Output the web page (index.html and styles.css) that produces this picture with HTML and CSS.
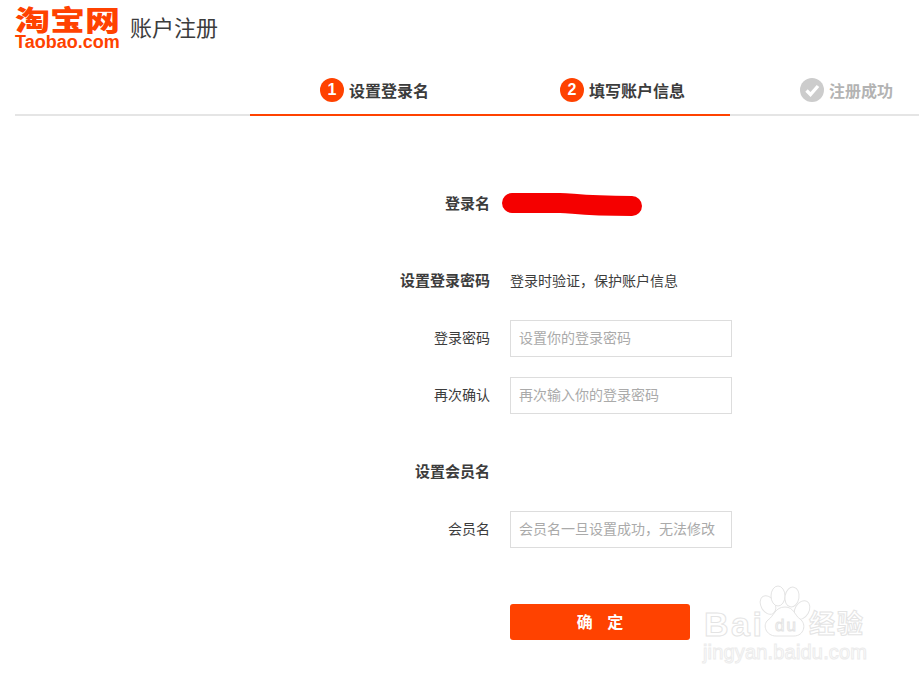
FILE: index.html
```html
<!DOCTYPE html>
<html lang="zh-CN">
<head>
    <meta charset="UTF-8">
    <meta name="viewport" content="width=device-width, initial-scale=1.0">
    <title>账户注册</title>
    <link rel="stylesheet" href="styles.css">
</head>
<body>
    <div class="page">
        <div class="header">
            <div class="logo">
                <div class="logo-cn">淘宝网</div>
                <div class="logo-en">Taobao.com</div>
            </div>
            <div class="page-title">账户注册</div>
        </div>

        <div class="steps">
            <div class="step-spacer"></div>
            <div class="step active"><span class="step-num">1</span>设置登录名</div>
            <div class="step active"><span class="step-num">2</span>填写账户信息</div>
            <div class="step done">
                <svg class="step-check" width="24" height="24" viewBox="0 0 24 24">
                    <circle cx="12" cy="12" r="12" fill="#ccc"/>
                    <path d="M6.5 12.5l4 4 7.5-8.5" fill="none" stroke="#fff" stroke-width="3.4"/>
                </svg>注册成功
            </div>
        </div>

        <form class="form">
            <div class="row section">
                <label class="label bold">登录名</label>
                <svg class="redact" width="144" height="27" viewBox="0 0 144 27">
                    <path d="M10 12H58C72 12 76 15 130 15" fill="none" stroke="#f50000" stroke-width="20" stroke-linecap="round"/>
                </svg>
            </div>
            <div class="row section">
                <label class="label bold">设置登录密码</label>
                <span class="hint">登录时验证，保护账户信息</span>
            </div>
            <div class="row">
                <label class="label">登录密码</label>
                <input class="input" type="password" placeholder="设置你的登录密码">
            </div>
            <div class="row">
                <label class="label">再次确认</label>
                <input class="input" type="password" placeholder="再次输入你的登录密码">
            </div>
            <div class="row section">
                <label class="label bold">设置会员名</label>
            </div>
            <div class="row">
                <label class="label">会员名</label>
                <input class="input" type="text" placeholder="会员名一旦设置成功，无法修改">
            </div>
            <div class="row submit-row">
                <span class="label"></span>
                <button class="btn" type="button">确&nbsp;&nbsp;&nbsp;&nbsp;定</button>
            </div>
        </form>

        <!-- 水印 -->
        <svg class="watermark" width="180" height="90" viewBox="0 0 180 90">
            <g fill="#fff" stroke="#e4e4e4" stroke-width="1">
                <ellipse cx="68" cy="25" rx="7" ry="10" transform="rotate(-30 68 25)"/>
                <ellipse cx="78" cy="16" rx="7" ry="10"/>
                <ellipse cx="92" cy="17" rx="7" ry="10" transform="rotate(10 92 17)"/>
                <ellipse cx="102" cy="30" rx="7" ry="10" transform="rotate(30 102 30)"/>
                <path d="M85 27C75 27 74 36 68 40C62 45 66 56 76 56H94C104 56 107 44 100 39C95 36 94 27 85 27Z"/>
                <text x="4" y="56" font-size="34" font-weight="bold" font-family="Liberation Sans, sans-serif" textLength="58">Bai</text>
                <text x="75" y="51" font-size="17" font-family="Liberation Sans, sans-serif" textLength="21">du</text>
                <text x="109" y="53" font-size="26" font-weight="bold" font-family="Noto Sans CJK SC, sans-serif" textLength="54">经验</text>
            </g>
            <text x="3" y="79" fill="#fff" stroke="#ececec" stroke-width="1" font-size="20" font-family="Liberation Sans, sans-serif" textLength="164">jingyan.baidu.com</text>
        </svg>
    </div>
</body>
</html>
```

FILE: styles.css
```css
body {
    margin: 0;
    background-color: #fff;
    color: #3c3c3c;
    font-family: "Noto Sans CJK SC", "Liberation Sans", sans-serif;
    font-size: 14px;
}
.page {
    position: relative;
    height: 684px;
    overflow: hidden;
}
.header {
    display: flex;
    height: 70px;
    padding-left: 15px;
}
.logo {
    width: 115px;
    color: #ff4200;
    font-weight: 900;
}
.logo-cn {
    height: 29px;
    margin-top: 5px;
    font-size: 35px;
    line-height: 35px;
    white-space: nowrap;
    transform: scale(1, 0.8);
    transform-origin: 0 0;
}
.logo-en {
    font-family: "Liberation Sans", sans-serif;
    font-size: 18px;
    line-height: 17px;
    white-space: nowrap;
}
.page-title {
    padding-top: 11px;
    font-size: 22px;
    line-height: 30px;
}
.steps {
    display: flex;
    height: 44px;
    margin-left: 15px;
    border-bottom: 2px solid #e5e5e5;
}
.step-spacer {
    width: 235px;
}
.step {
    display: flex;
    align-items: center;
    gap: 5px;
    width: 240px;
    height: 44px;
    padding: 0 0 4px 70px;
    box-sizing: border-box;
    font-size: 16px;
    font-weight: bold;
    white-space: nowrap;
}
.step.active {
    height: 46px;
    padding-bottom: 4px;
    border-bottom: 2px solid #ff4200;
}
.step.done {
    flex: 1;
    color: #b3b3b3;
}
.step-num,
.step-check {
    width: 24px;
    height: 24px;
}
.step-num {
    border-radius: 50%;
    background-color: #ff4200;
    color: #fff;
    font-family: "Liberation Sans", sans-serif;
    font-size: 16px;
    line-height: 24px;
    text-align: center;
}
.form {
    padding-top: 70px;
}
.row {
    display: flex;
    align-items: center;
    gap: 20px;
    height: 37px;
    margin-bottom: 20px;
}
.row.section {
    margin-bottom: 20px;
}
.row.section:first-child,
.row:nth-child(4) {
    margin-bottom: 40px;
}
.label {
    width: 490px;
    padding-bottom: 4px;
    text-align: right;
}
.bold {
    font-size: 15px;
    font-weight: bold;
}
.hint {
    padding-bottom: 4px;
    color: #3c3c3c;
}
.redact {
    margin-left: -8px;
}
.input {
    width: 222px;
    height: 37px;
    padding: 0 8px 3px;
    box-sizing: border-box;
    border: 1px solid #ddd;
    outline: none;
    font-family: inherit;
    font-size: 14px;
}
.input::placeholder {
    color: #aaa;
}
.submit-row {
    margin-top: 55px;
}
.btn {
    width: 180px;
    height: 36px;
    padding-bottom: 3px;
    border: none;
    border-radius: 3px;
    background-color: #ff4200;
    color: #fff;
    font-family: inherit;
    font-size: 16px;
    font-weight: bold;
}
.watermark {
    position: absolute;
    left: 700px;
    top: 580px;
}
```
